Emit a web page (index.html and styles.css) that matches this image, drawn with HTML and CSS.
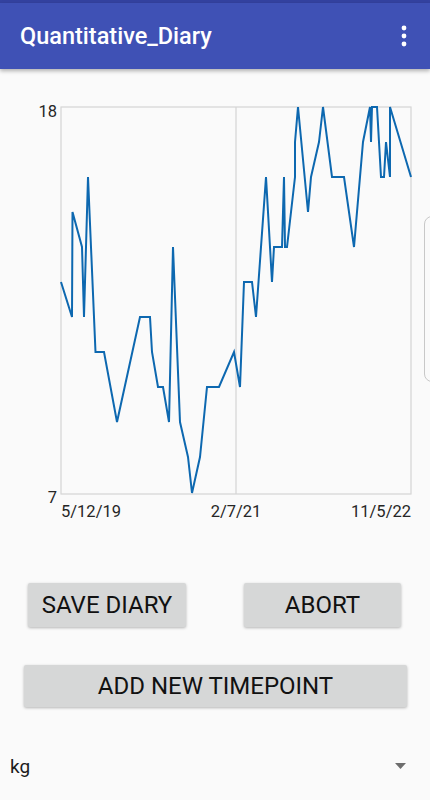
FILE: index.html
```html
<!DOCTYPE html>
<html>
<head>
<meta charset="utf-8">
<link rel="stylesheet" href="styles.css">
</head>
<body>
<div class="status"></div>
<header class="toolbar">
  <h1 class="title">Quantitative_Diary</h1>
  <svg class="overflow" width="8" height="22" viewBox="0 0 8 22"><circle cx="4" cy="3" r="2.4"/><circle cx="4" cy="11" r="2.4"/><circle cx="4" cy="19" r="2.4"/></svg>
</header>
<main class="content">
  <svg class="chart" width="430" height="460" viewBox="0 70 430 460">
    <rect x="61" y="108" width="350" height="387" fill="none" stroke="#d4d4d4" stroke-width="1.2"/>
    <line x1="236" y1="108" x2="236" y2="495" stroke="#d4d4d4" stroke-width="1.2"/>
    <polyline fill="none" stroke="#0d68b0" stroke-width="2" stroke-linejoin="miter" points="61,283 72,318 72.5,213 82,248 84,318 88,178 95.5,353 104,353 117,423 140,318 150,318 152,353 158,388 163,388 169,423 173,248 180,423 188,458 192,494 200,458 207,388 219,388 234,353 240,388 244,283 252,283 256,318 266,178 272,283 274,248 282,248 284,178 285,248 287,248 295,178 295,143 298,108 308,213 311,178 319,143 323,108 332,178 344,178 354,248 363,143 370,108 371,143 372,108 377,108 381,178 384,178 386,143 390,178 390,108 411,178"/>
    <text class="axis" x="57" y="118" text-anchor="end">18</text>
    <text class="axis" x="57" y="504" text-anchor="end">7</text>
    <text class="axis" x="61" y="518" text-anchor="start">5/12/19</text>
    <text class="axis" x="236" y="518" text-anchor="middle">2/7/21</text>
    <text class="axis" x="411" y="518" text-anchor="end">11/5/22</text>
  </svg>
  <div class="btn-row">
    <button class="btn btn-save">SAVE DIARY</button>
    <button class="btn btn-abort">ABORT</button>
  </div>
  <button class="btn btn-wide">ADD NEW TIMEPOINT</button>
  <div class="spinner">
    <span class="spinner-text">kg</span>
    <svg class="caret" width="11" height="6" viewBox="0 0 11 6"><path d="M0 0h11L5.5 6z"/></svg>
  </div>
</main>
<div class="edge-panel"></div>
</body>
</html>
```
FILE: styles.css
```css
html, body {
  margin: 0;
  padding: 0;
  background: #fafafa;
  width: 430px;
  height: 800px;
  overflow: hidden;
  font-family: Roboto, "Noto Sans", sans-serif;
}
.status {
  height: 3px;
  background: #3442a0;
}
.toolbar {
  position: relative;
  z-index: 2;
  height: 66px;
  background: #3f51b5;
  display: flex;
  align-items: center;
  justify-content: space-between;
  padding: 0 22px 0 20px;
  box-shadow: 0 2px 4px rgba(0, 0, 0, 0.3);
}
.title {
  margin: 0;
  color: #fff;
  font-weight: 500;
  font-size: 23.5px;
  letter-spacing: 0;
}
.overflow {
  fill: #fff;
  display: block;
}
.content {
  display: flex;
  flex-direction: column;
}
.chart {
  display: block;
}
.axis {
  font-family: Roboto, sans-serif;
  font-size: 16.5px;
  fill: #262626;
}
.btn-row {
  display: flex;
  gap: 58px;
  padding-left: 28px;
  margin-top: 54px;
}
.btn {
  border: none;
  border-radius: 2px;
  background: #d6d7d7;
  box-shadow: 0 1px 3px rgba(0, 0, 0, 0.28);
  font-family: Roboto, sans-serif;
  font-weight: 400;
  font-size: 24px;
  color: #111;
  padding: 0;
  display: flex;
  align-items: center;
  justify-content: center;
}
.btn-save {
  width: 158px;
  height: 44px;
}
.btn-abort {
  width: 157px;
  height: 44px;
}
.btn-wide {
  margin-top: 38px;
  margin-left: 24px;
  width: 383px;
  height: 42px;
}
.spinner {
  margin-top: 37px;
  height: 44px;
  display: flex;
  align-items: center;
  justify-content: space-between;
  padding: 0 24px 0 10px;
}
.spinner-text {
  font-size: 19px;
  color: #1c1c1c;
}
.caret {
  fill: #6d6d6d;
  display: block;
}
.edge-panel {
  position: absolute;
  left: 424px;
  top: 216px;
  width: 20px;
  height: 164px;
  border: 1px solid #c8c8c8;
  border-radius: 8px;
  background: #fafafa;
}
```
